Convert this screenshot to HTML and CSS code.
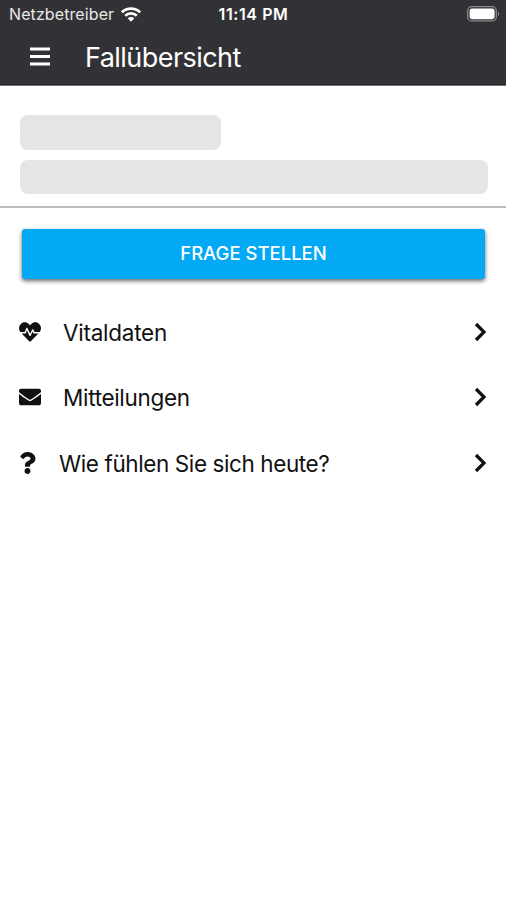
FILE: index.html
```
<!DOCTYPE html>
<html lang="de">
<head>
<meta charset="utf-8">
<title>Fallübersicht</title>
<link rel="stylesheet" href="styles.css">
</head>
<body>
<header class="header">
  <div class="status">
    <div class="carrier"><span class="carrier-name">Netzbetreiber</span>
      <svg class="wifi" viewBox="0 0 20 15"><g fill="none" stroke="#fff" stroke-width="2.7"><path d="M.9 5.3a13 13 0 0 1 18.2 0"/><path d="M4.2 8.8a8.3 8.3 0 0 1 11.6 0"/></g><path fill="#fff" d="M6.6 11.3a4.9 4.9 0 0 1 6.8 0L10 14.8z"/></svg>
    </div>
    <span class="time">11:14 PM</span>
    <svg class="battery" viewBox="0 0 33 16"><rect x=".7" y=".7" width="28.6" height="14.2" rx="4" fill="none" stroke="#8b8b8e" stroke-width="1.3"/><rect x="2.6" y="2.6" width="25" height="10.6" rx="2.4" fill="#fff"/><path d="M31 5.2q2.4 2.6 0 5.2z" fill="#8b8b8e"/></svg>
  </div>
  <div class="toolbar">
    <svg class="menu" viewBox="0 0 20 19"><path d="M0 2h20M0 9.5h20M0 17h20" stroke="#fff" stroke-width="3"/></svg>
    <h1 class="title">Fallübersicht</h1>
  </div>
</header>
<section class="patient">
  <div class="placeholder short"></div>
  <div class="placeholder"></div>
</section>
<main>
  <button class="ask"><span>FRAGE STELLEN</span></button>
  <nav class="list">
    <a class="item">
      <svg class="icon" viewBox="0 0 512 512"><path d="M320.2 243.8l-49.7 99.4c-6 12.1-23.4 11.7-28.9-.6l-56.9-126.3-30 71.7H60.6l182.5 186.5c7.1 7.3 18.6 7.3 25.7 0L451.4 288H342.3l-22.1-44.2zM473.7 73.9l-2.4-2.5c-51.5-52.6-135.8-52.6-187.4 0L256 100l-27.9-28.5c-51.5-52.7-135.9-52.7-187.4 0l-2.4 2.4C-10.4 123.7-12.5 203 31 256h102.4l35.9-86.2c5.4-12.9 23.6-13.2 29.4-.4l58.2 129.3 49-97.9c5.9-11.8 22.7-11.8 28.6 0l27.6 55.2H481c43.5-53 41.4-132.3-7.3-182.1z"/></svg>
      <span class="label vital">Vitaldaten</span>
      <svg class="chevron" viewBox="0 0 13 20"><path d="M2 2l8 8-8 8"/></svg>
    </a>
    <a class="item">
      <svg class="icon" viewBox="0 0 512 512"><path d="M502.3 190.8c3.9-3.1 9.7-.2 9.7 4.7V400c0 26.5-21.5 48-48 48H48c-26.5 0-48-21.5-48-48V195.6c0-5 5.7-7.8 9.7-4.7 22.4 17.4 52.1 39.5 154.1 113.6 21.1 15.4 56.7 47.8 92.2 47.6 35.7.3 72-32.8 92.3-47.6 102-74.1 131.6-96.3 154-113.7zM256 320c23.2.4 56.6-29.2 73.4-41.4 132.7-96.3 142.8-104.7 173.4-128.7 5.8-4.5 9.2-11.5 9.2-18.9v-19c0-26.5-21.5-48-48-48H48c-26.5 0-48 21.5-48 48v19c0 7.4 3.4 14.3 9.2 18.9 30.6 23.9 40.7 32.4 173.4 128.7 16.8 12.2 50.2 41.8 73.4 41.4z"/></svg>
      <span class="label messages">Mitteilungen</span>
      <svg class="chevron" viewBox="0 0 13 20"><path d="M2 2l8 8-8 8"/></svg>
    </a>
    <a class="item">
      <svg class="icon question" viewBox="0 0 384 512"><path d="M202.021 0C122.202 0 70.503 32.703 29.914 91.026c-7.363 10.58-5.093 25.086 5.178 32.874l43.138 32.709c10.373 7.865 25.132 6.026 33.253-4.148 25.049-31.381 43.63-49.449 82.757-49.449 30.764 0 68.816 19.799 68.816 49.631 0 22.552-18.617 34.134-48.993 51.164-35.423 19.86-82.299 44.576-82.299 106.405V320c0 13.255 10.745 24 24 24h72.471c13.255 0 24-10.745 24-24v-5.773c0-42.86 125.268-44.645 125.268-160.627C377.504 66.256 286.902 0 202.021 0zM192 373.459c-38.196 0-69.271 31.075-69.271 69.271 0 38.195 31.075 69.27 69.271 69.27s69.271-31.075 69.271-69.271-31.075-69.27-69.271-69.27z"/></svg>
      <span class="label feeling">Wie fühlen Sie sich heute?</span>
      <svg class="chevron" viewBox="0 0 13 20"><path d="M2 2l8 8-8 8"/></svg>
    </a>
  </nav>
</main>
</body>
</html>
```

FILE: styles.css
```
* { box-sizing: border-box; }
body {
  margin: 0;
  min-height: 900px;
  background: #fff;
  color: #111;
  font-family: Inter, "Liberation Sans", sans-serif;
}
svg { display: block; flex: none; }
.header {
  height: 86px;
  background: #323236;
  border-bottom: 1px solid #77777a;
  box-shadow: inset 0 -1px #252529;
  color: #fff;
}
.status {
  display: grid;
  grid-template-columns: 1fr auto 1fr;
  align-items: center;
  height: 28px;
  padding: 0 6px 0 9px;
}
.carrier { display: flex; align-items: center; gap: 7px; }
.carrier-name { font-size: 16px; letter-spacing: 0.1px; color: #e8e8e8; }
.wifi { width: 20px; height: 15px; }
.time { margin-right: 2px; font-size: 16px; font-weight: 600; letter-spacing: 0.6px; }
.battery { width: 33px; height: 16px; justify-self: end; }
.toolbar { display: flex; align-items: center; height: 58px; padding-left: 30px; }
.menu { width: 20px; height: 19px; margin-top: -1px; }
.title { margin: 2px 0 0 35px; font-size: 27px; font-weight: 400; line-height: 32px; letter-spacing: -0.55px; }
.patient {
  display: flex;
  flex-direction: column;
  gap: 10px;
  height: 122px;
  padding: 29px 18px 0 20px;
  border-bottom: 2px solid #bbb;
}
.placeholder { height: 34px; border-radius: 8px; background: #e5e5e5; }
.short { width: 201px; height: 35px; }
main { padding: 21px 21px 0 22px; }
.ask {
  display: block;
  width: 100%;
  height: 50px;
  padding: 0 0 2px;
  border: 0;
  border-radius: 3px;
  background: #03a9f4;
  box-shadow: 0 2px 4px rgba(0, 0, 0, 0.6);
  color: #fff;
  font: 500 18.5px/48px Inter, sans-serif;
}
.list { margin: 20px -2px 0 -3px; }
.item { display: flex; align-items: center; height: 65.5px; }
.icon { width: 22px; height: 22px; fill: #111; }
.question { width: 17px; height: 22px; }
.label { flex: 1; margin: 2px 0 0 22px; font-size: 22.5px; line-height: 30px; white-space: nowrap; }
.vital { letter-spacing: -0.25px; }
.messages { letter-spacing: -0.32px; }
.feeling { margin-left: 23px; letter-spacing: -0.4px; }
.chevron { width: 13px; height: 20px; fill: none; stroke: #111; stroke-width: 3.2; }
```
